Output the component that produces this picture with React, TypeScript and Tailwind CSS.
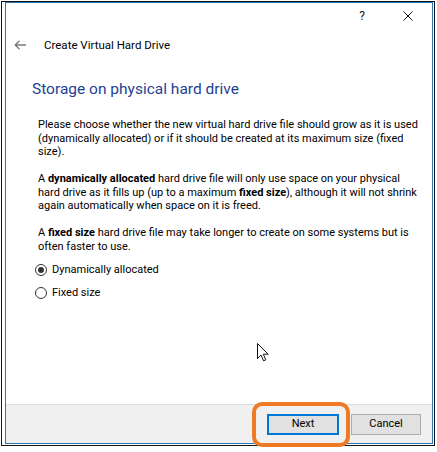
import React, { useState } from 'react';

const font = { fontFamily: 'Roboto, "Liberation Sans", sans-serif' };

function Radio({ checked, label, onClick }: { checked: boolean; label: string; onClick: () => void }) {
  return (
    <div className="flex h-[23px] items-center gap-[5px] pl-[29px]" onClick={onClick}>
      <span className="flex h-[12px] w-[12px] items-center justify-center rounded-full border border-[#333] bg-white">
        {checked && <span className="h-[6px] w-[6px] rounded-full bg-[#333]" />}
      </span>
      <span className="text-[11px] leading-[13px] text-black">{label}</span>
    </div>
  );
}

function Cursor() {
  return (
    <svg width="13" height="19" viewBox="0 0 13 19" className="absolute left-[257px] top-[343px]">
      <path d="M0.5 0.5 L0.5 15.5 L4 12 L6.6 17.8 L8.8 16.8 L6.3 11.2 L11.2 11.2 Z" fill="#fff" stroke="#111" strokeWidth="1" strokeLinejoin="miter" />
    </svg>
  );
}

export default function App() {
  const [mode, setMode] = useState<'dynamic' | 'fixed'>('dynamic');

  return (
    <div className="relative h-[452px] w-[437px] overflow-hidden bg-white pl-[1px] pt-[1px]" style={font}>
      <div className="flex h-[445px] w-[434px] border border-[#141414] pb-[1px] pl-[3px] pr-[1px]">
        <div className="flex flex-1 flex-col border border-[#2e75b6] bg-white">
          {/* title bar */}
          <div className="flex h-[26px] items-center justify-end pr-[19px]">
            <span className="w-[12px] text-center text-[12px] leading-[14px] text-[#222]">?</span>
            <span className="w-[35px]" />
            <svg width="10" height="10" viewBox="0 0 10 10">
              <path d="M0.5 0.5 L9.5 9.5 M9.5 0.5 L0.5 9.5" stroke="#111" strokeWidth="1" />
            </svg>
          </div>

          {/* wizard header */}
          <div className="flex h-[32px] items-center pl-[8px]">
            <svg width="12" height="10" viewBox="0 0 12 10">
              <path d="M12 5 H1.2 M5.5 0.7 L1.2 5 L5.5 9.3" fill="none" stroke="#7a7a7a" strokeWidth="1.3" />
            </svg>
            <span className="ml-[18px] text-[11.5px] leading-[14px] text-black">Create Virtual Hard Drive</span>
          </div>

          <div className="flex flex-1 flex-col">
            <h1 className="mt-[18px] pl-[26px] text-[15.5px] font-normal leading-[20px] text-[#1f3f96]">Storage on physical hard drive</h1>

            <div className="mt-[19px] pl-[32px] text-[11px] leading-[13.5px] text-black">
              <p className="whitespace-nowrap">
                Please choose whether the new virtual hard drive file should grow as it is used
                <br />
                (dynamically allocated) or if it should be created at its maximum size (fixed
                <br />
                size).
              </p>
              <p className="mt-[13.5px] whitespace-nowrap">
                A <b>dynamically allocated</b> hard drive file will only use space on your physical
                <br />
                hard drive as it fills up (up to a maximum <b>fixed size</b>), although it will not shrink
                <br />
                again automatically when space on it is freed.
              </p>
              <p className="mt-[13.5px] whitespace-nowrap">
                A <b>fixed size</b> hard drive file may take longer to create on some systems but is
                <br />
                often faster to use.
              </p>
            </div>

            <div className="mt-[5px] flex flex-col">
              <Radio checked={mode === 'dynamic'} label="Dynamically allocated" onClick={() => setMode('dynamic')} />
              <Radio checked={mode === 'fixed'} label="Fixed size" onClick={() => setMode('fixed')} />
            </div>
          </div>

          {/* footer */}
          <div className="flex h-[39px] items-start justify-end gap-[12px] border-t border-[#dcdcdc] bg-[#f0f0f0] pr-[11px] pt-[9px]">
            <button className="flex h-[21px] w-[72px] items-center justify-center border-2 border-[#0078d7] bg-[#e1e1e1] text-[11px] text-black">
              Next
            </button>
            <button className="flex h-[21px] w-[70px] items-center justify-center border border-[#adadad] bg-[#e1e1e1] text-[11px] text-black">
              Cancel
            </button>
          </div>
        </div>
      </div>

      <Cursor />
      {/* highlight annotation */}
      <div className="absolute left-[252px] top-[402px] h-[45px] w-[98px] rounded-[10px] border-[4px] border-[#ef7a26]" />
    </div>
  );
}
